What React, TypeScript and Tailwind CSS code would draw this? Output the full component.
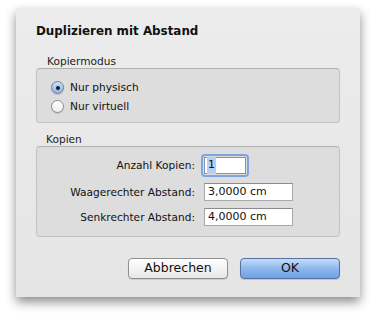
const font = { fontFamily: '"DejaVu Sans", "Liberation Sans", sans-serif' };

function Radio({ checked, label }: { checked?: boolean; label: string }) {
  return (
    <div className="flex h-[19px] items-center">
      <span
        className={
          checked
            ? "flex h-[13px] w-[13px] items-center justify-center rounded-full border border-[#6d7f9c] bg-gradient-to-b from-[#cfe0f5] to-[#8fb4e3] shadow-[0_1px_1px_rgba(0,0,0,0.15)]"
            : "flex h-[13px] w-[13px] items-center justify-center rounded-full border border-[#8e8e8e] bg-gradient-to-b from-[#ffffff] to-[#ececec] shadow-[0_1px_1px_rgba(0,0,0,0.15)]"
        }
      >
        {checked && <span className="h-[4px] w-[4px] rounded-full bg-[#1a1a1a]" />}
      </span>
      <span className="ml-[6px] text-[10.6px] leading-none text-[#111]">{label}</span>
    </div>
  );
}

function Field({ label, value, className }: { label: string; value: string; className?: string }) {
  return (
    <div className={"flex items-center " + (className ?? "")}>
      <span className="w-[159px] pr-[1px] text-right text-[10.6px] leading-none text-[#111]">{label}</span>
      <div className="ml-[8px] flex h-[18px] w-[89px] items-center border border-[#a8a8a8] border-t-[#8c8c8c] bg-white pl-[3px] text-[11px] text-[#111]">
        {value}
      </div>
    </div>
  );
}

export default function App() {
  return (
    <div className="min-h-[322px] bg-white pl-4 pt-2" style={font}>
      <div className="h-[289px] w-[344px] bg-gradient-to-b from-[#ececec] to-[#e5e5e5] px-5 pt-[15px] shadow-[0_5px_10px_rgba(0,0,0,0.45)]">
        <h1 className="h-4 text-[11.9px] font-bold leading-4 text-[#111]">Duplizieren mit Abstand</h1>

        <div className="mt-4 pl-[11px] text-[10.6px] leading-[13px] text-[#222]">Kopiermodus</div>
        <div className="h-[55px] rounded-[4px] border border-[#c2c2c2] border-t-[#b0b0b0] bg-[#dddddd] pl-[14px] pt-[9px]">
          <Radio checked label="Nur physisch" />
          <Radio label="Nur virtuell" />
        </div>

        <div className="mt-[10px] pl-[10px] text-[10.6px] leading-[13px] text-[#222]">Kopien</div>
        <div className="h-[91px] rounded-[4px] border border-[#c2c2c2] border-t-[#b0b0b0] bg-[#dddddd] pt-[9px]">
          <div className="flex items-center">
            <span className="w-[159px] pr-[1px] text-right text-[10.6px] leading-none text-[#111]">Anzahl Kopien:</span>
            <div className="ml-[7px] rounded-[2px] p-[1px] shadow-[0_0_0_2px_#7fa6dc]">
              <div className="flex h-[17px] w-[42px] items-center border border-[#7d93b5] bg-white pl-[2px] text-[11px] text-[#111]">
                <span className="bg-[#b3cff5] px-[1px]">1</span>
              </div>
            </div>
          </div>
          <Field className="mt-[8px]" label="Waagerechter Abstand:" value="3,0000 cm" />
          <Field className="mt-[7px]" label="Senkrechter Abstand:" value="4,0000 cm" />
        </div>

        <div className="mt-[21px] flex justify-end gap-3">
          <button className="h-[21px] w-[100px] rounded-[4px] border border-[#8f8f8f] bg-gradient-to-b from-[#ffffff] via-[#f3f3f3] to-[#e6e6e6] text-[12.5px] text-[#111] shadow-[0_1px_1px_rgba(0,0,0,0.12)]">
            Abbrechen
          </button>
          <button className="h-[21px] w-[100px] rounded-[4px] border border-[#5671a3] bg-gradient-to-b from-[#c6dcf7] via-[#8fb8ec] to-[#6ea2e6] text-[12.5px] text-[#111] shadow-[0_1px_1px_rgba(0,0,0,0.15)]">
            OK
          </button>
        </div>
      </div>
    </div>
  );
}
